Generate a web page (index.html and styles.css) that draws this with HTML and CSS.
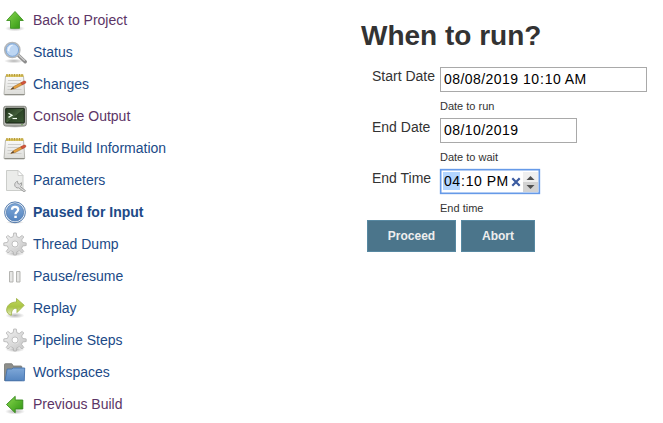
FILE: index.html
```
<!DOCTYPE html>
<html lang="en">
<head>
<meta charset="utf-8">
<title>Paused for Input</title>
<link rel="stylesheet" href="styles.css">
</head>
<body>
<svg class="defs" aria-hidden="true">
  <defs>
    <linearGradient id="green" x1="0" y1="0" x2="1" y2="1"><stop offset="0" stop-color="#8ad84e"/><stop offset="1" stop-color="#2c9310"/></linearGradient>
    <linearGradient id="lime" x1="0" y1="0" x2="0" y2="1"><stop offset="0" stop-color="#c3d95c"/><stop offset=".5" stop-color="#a9c444"/><stop offset="1" stop-color="#e4ecc0"/></linearGradient>
    <linearGradient id="paper" x1="0" y1="0" x2="0" y2="1"><stop offset="0" stop-color="#fafafa"/><stop offset="1" stop-color="#dcdcd8"/></linearGradient>
    <linearGradient id="blue" x1="0" y1="0" x2="0" y2="1"><stop offset="0" stop-color="#7fa8d8"/><stop offset="1" stop-color="#5585c0"/></linearGradient>
    <linearGradient id="metal" x1="0" y1="0" x2="1" y2="1"><stop offset="0" stop-color="#f2f2f2"/><stop offset="1" stop-color="#c4c4c4"/></linearGradient>
    <linearGradient id="screen" x1="0" y1="0" x2="1" y2="1"><stop offset="0" stop-color="#20331c"/><stop offset=".5" stop-color="#44603c"/><stop offset=".52" stop-color="#2c4527"/><stop offset="1" stop-color="#3b5734"/></linearGradient>
    <radialGradient id="shade"><stop offset="0" stop-color="#000" stop-opacity=".3"/><stop offset="1" stop-color="#000" stop-opacity="0"/></radialGradient>
    <symbol id="notepad" viewBox="0 0 24 24">
      <path d="M2.500 4h18l1.200 18q0 1-1 1H2q-1 0-1-1z" fill="url(#paper)" stroke="#aaa9a3" stroke-width=".8"/>
      <path d="M1.500 22.500h20" stroke="#8f8f88" stroke-width="1"/>
      <path d="M3 2.500h17.500v2.500H3z" fill="#dcc868"/>
      <path d="M4 2v2.500M6.500 2v2.500M9 2v2.500M11.500 2v2.500M14 2v2.500M16.500 2v2.500M19 2v2.500" stroke="#b79b35" stroke-width="1.200"/>
      <path d="M5 8.500h13M4.500 11.500h12M4.500 14.500h6M4.500 17.500h14" stroke="#cfcfcc" stroke-width="1"/>
      <path d="M7.800 17.400l3-2.900 7.700-4 1.300 2-7.700 4.100z" fill="#e7a13c" stroke="#a16a26" stroke-width=".6"/>
      <path d="M7.500 17.500l2.700-2.600 1 1.700z" fill="#4e4033"/>
      <path d="M17.800 10.800l3-1.700q1.500-.5 2.100.6.400 1.100-.8 1.700l-2.900 1.500z" fill="#d3553b" stroke="#a84430" stroke-width=".5"/>
    </symbol>
    <symbol id="gear" viewBox="0 0 24 24">
      <ellipse cx="12" cy="21.500" rx="9.500" ry="2.700" fill="url(#shade)"/>
      <path d="M10.200 4.600l.5-3.600h2.600l.5 3.600 2.400 1 3-2.200 1.600 1.600-2.200 3 1 2.400 3.600.5v2.600l-3.600.5-1 2.400 2.200 3-1.600 1.600-3-2.200-2.400 1-.5 3.200h-2.600l-.5-3.200-2.400-1-3 2.200L3.200 19.400l2.200-3-1-2.400-3.600-.5v-2.600l3.600-.5 1-2.400-2.200-3L4.800 3.400l3 2.200z" fill="url(#metal)" stroke="#b2b2b2" stroke-width=".8" stroke-linejoin="round"/>
      <circle cx="12" cy="12" r="4.500" fill="#dedede"/>
      <circle cx="12" cy="12" r="3" fill="#fff" stroke="#b5b5b5" stroke-width=".8"/>
    </symbol>
  </defs>
</svg>
<div class="page">
  <nav class="tasks">
    <a class="task visited" href="#"><svg class="icon" viewBox="0 0 24 24"><ellipse cx="12" cy="20.500" rx="10" ry="2.800" fill="url(#shade)"/><path d="M12 3.500l8.300 9h-3.800v7.800h-9v-7.800H3.700z" fill="url(#green)" stroke="#409422" stroke-width=".9"/></svg><span>Back to Project</span></a>
    <a class="task" href="#"><svg class="icon" viewBox="0 0 24 24"><ellipse cx="11" cy="21" rx="10" ry="2.300" fill="url(#shade)"/><path d="M15.500 15.500l6.700 6.300" stroke="#8c8c8c" stroke-width="3.400" stroke-linecap="round"/><path d="M15.800 15.200l6 5.600" stroke="#cecece" stroke-width="1.200"/><circle cx="9.300" cy="10" r="7.500" fill="#b9d4f1" stroke="#b4b7ba" stroke-width="1.700"/><circle cx="9.300" cy="10" r="6.300" fill="#bdd6f3" stroke="#6d9bd0" stroke-width=".8"/><path d="M4.500 10.500c0-4 3-6 6-5.500-2.500 1-4.500 3-4 7z" fill="#eef6ff"/></svg><span>Status</span></a>
    <a class="task" href="#"><svg class="icon"><use href="#notepad"/></svg><span>Changes</span></a>
    <a class="task visited" href="#"><svg class="icon" viewBox="0 0 24 24"><ellipse cx="12" cy="22.300" rx="10" ry="1.700" fill="url(#shade)"/><rect x=".7" y="2.300" width="22.600" height="19.700" rx="2" fill="#b9bbb5" stroke="#777972" stroke-width=".9"/><rect x="2.700" y="4.300" width="18.600" height="14.700" rx=".6" fill="url(#screen)" stroke="#152012"/><path d="M5.500 9.300l3.500 2-3.500 2.100" fill="none" stroke="#f2fff0" stroke-width="1.300"/><path d="M9.500 14.500h4.500" stroke="#f2fff0" stroke-width="1.200"/><path d="M18 20.700h2" stroke="#76a45f"/></svg><span>Console Output</span></a>
    <a class="task" href="#"><svg class="icon"><use href="#notepad"/></svg><span>Edit Build Information</span></a>
    <a class="task" href="#"><svg class="icon" viewBox="0 0 24 24"><path d="M3.500 2.500h11.500l5 5v15h-16.500z" fill="#ebecea" stroke="#c6c8c5" stroke-width=".9"/><path d="M15 2.500v5h5z" fill="#fff" stroke="#c6c8c5" stroke-width=".8"/><path d="M14.500 13.200l.3 2.300 2 .7 1.500-1.600c.8 2-.1 3.500-1 4l5.200 4-1.200 1.400-5.600-4.200c-2 .6-4-.8-4-3 0-1.700 1.200-3.200 2.800-3.600z" fill="#ddd" stroke="#989a98" stroke-width=".9"/></svg><span>Parameters</span></a>
    <a class="task current" href="#"><svg class="icon" viewBox="0 0 24 24"><ellipse cx="12" cy="22.300" rx="9" ry="1.700" fill="url(#shade)"/><circle cx="12" cy="12.300" r="10.400" fill="#e9f0f8" stroke="#426da4" stroke-width=".9"/><circle cx="12" cy="12.300" r="8.700" fill="url(#blue)" stroke="#4d78ae" stroke-width=".7"/><path d="M9 9.800c0-2 1.300-3 3-3s3.200 1 3.200 2.700c0 2.300-2.700 2.300-2.700 4.700" fill="none" stroke="#fff" stroke-width="2.300"/><path d="M11.300 15.700h2.500v2.300h-2.500z" fill="#fff"/></svg><span>Paused for Input</span></a>
    <a class="task" href="#"><svg class="icon"><use href="#gear"/></svg><span>Thread Dump</span></a>
    <a class="task" href="#"><svg class="icon" viewBox="0 0 24 24"><path d="M6.500 7.500h3.500v10.500h-3.500zM13.500 7.500h3.500v10.500h-3.500z" fill="#e6e6e4" stroke="#b5b5b2"/></svg><span>Pause/resume</span></a>
    <a class="task" href="#"><svg class="icon" viewBox="0 0 24 24"><ellipse cx="12" cy="19.500" rx="9.500" ry="3" fill="url(#shade)"/><path d="M13.500 2.500l7.700 6.800-7.200 7.200v-4.200c-3.500-.3-5.300 1.500-5.500 5.200l-.2 1.800c-3-.8-4.600-2.700-4.600-5.300 0-4.700 4-8 9.800-8z" fill="url(#lime)" stroke="#9fb348" stroke-width=".9" stroke-linejoin="round"/></svg><span>Replay</span></a>
    <a class="task" href="#"><svg class="icon"><use href="#gear"/></svg><span>Pipeline Steps</span></a>
    <a class="task" href="#"><svg class="icon" viewBox="0 0 24 24"><path d="M1.500 20.500V4.500q0-.8.800-.8h6.200q.7 0 1 .8l.5 1.500h8q.8 0 .8.800V20.500z" fill="#8e8f8b" stroke="#747572" stroke-width=".8"/><path d="M4.200 9h4.500l1.500-1h11.500l-.4 12.800H2z" fill="url(#blue)" stroke="#4472ad" stroke-width=".9"/></svg><span>Workspaces</span></a>
    <a class="task visited" href="#"><svg class="icon" viewBox="0 0 24 24"><ellipse cx="12" cy="19.500" rx="10" ry="3" fill="url(#shade)"/><path d="M3.500 12.500l8.700-8.200v3.700h7.600v9h-7.600v3.800z" fill="url(#green)" stroke="#35881d" stroke-width=".9"/></svg><span>Previous Build</span></a>
  </nav>
  <main class="content">
    <h1>When to run?</h1>
    <form class="form">
      <div class="row">
        <label>Start Date</label>
        <div><div class="input datetime">08/08/2019 10<span class="colon">:</span>10 AM</div><p class="hint">Date to run</p></div>
      </div>
      <div class="row">
        <label>End Date</label>
        <div><div class="input date">08/10/2019</div><p class="hint">Date to wait</p></div>
      </div>
      <div class="row">
        <label>End Time</label>
        <div>
          <div class="input time"><span class="value"><mark>04</mark><span class="colon">:</span>10 PM</span>
            <svg class="clear" viewBox="0 0 10 10"><path d="M1.300 1.300l7.400 7.400M8.700 1.300L1.300 8.700" stroke="#3b5ba0" stroke-width="2.200"/></svg>
            <svg class="spinner" viewBox="0 0 15 20"><path d="M0 0h15v10H0z" fill="#efefef"/><path d="M0 10h15v10H0z" fill="#d2d2d2"/><path d="M3.500 8h8l-4-4zM3.500 13h8l-4 4z" fill="#505050"/></svg>
          </div>
          <p class="hint">End time</p>
        </div>
      </div>
      <div class="actions"><button type="button" class="proceed">Proceed</button><button type="button" class="abort">Abort</button></div>
    </form>
  </main>
</div>
</body>
</html>
```
FILE: styles.css
```
* { box-sizing: border-box; }
body { margin: 0; background: #fff; color: #333; font-family: "Liberation Sans", Arial, sans-serif; font-size: 14px; overflow: hidden; }
.defs { display: block; width: 0; height: 0; }
.page { display: flex; height: 423px; }
.tasks { width: 361px; padding: 4px 0 0 3px; }
.task { display: flex; align-items: center; gap: 6px; height: 32px; color: #204a87; text-decoration: none; line-height: 16px; }
.visited { color: #5c3566; }
.current { font-weight: bold; }
.icon { width: 24px; height: 24px; flex: none; }
.content { width: 302px; padding-top: 19px; }
h1 { margin: 0; height: 48px; font-size: 28px; line-height: 33px; white-space: nowrap; }
.row { display: grid; grid-template-columns: 79px 1fr; height: 51px; }
.row label { padding: 1px 0 0 11px; line-height: 16px; white-space: nowrap; }
.input { height: 25px; border: 1px solid #a9a9a9; padding: 0 3px; line-height: 23px; color: #000; letter-spacing: .45px; white-space: nowrap; }
.colon { padding: 0 .5px; }
.datetime { width: 207px; }
.date { width: 137px; }
.time { display: flex; align-items: center; width: 100px; border: 1px solid #669ae8; box-shadow: inset 0 0 0 .5px #669ae8, 0 0 1px #669ae8; padding: 0 2px; }
.value { width: 67px; }
mark { display: inline-block; height: 18px; line-height: 18px; padding-left: 1px; background: #b3d5ff; color: #000; }
.clear { width: 10px; height: 10px; margin-left: 2px; flex: none; }
.spinner { width: 15px; height: 20px; margin-left: 2px; flex: none; }
.hint { margin: 8px 0 0; font-size: 11px; line-height: 13px; }
.actions { display: flex; gap: 5px; padding-left: 6px; }
button { height: 32px; padding: 0; border: 1px solid #5788a1; background: #4b758b; color: #eee; font: bold 12px "Liberation Sans", Arial, sans-serif; }
.proceed { width: 89px; }
.abort { width: 74px; }
```
